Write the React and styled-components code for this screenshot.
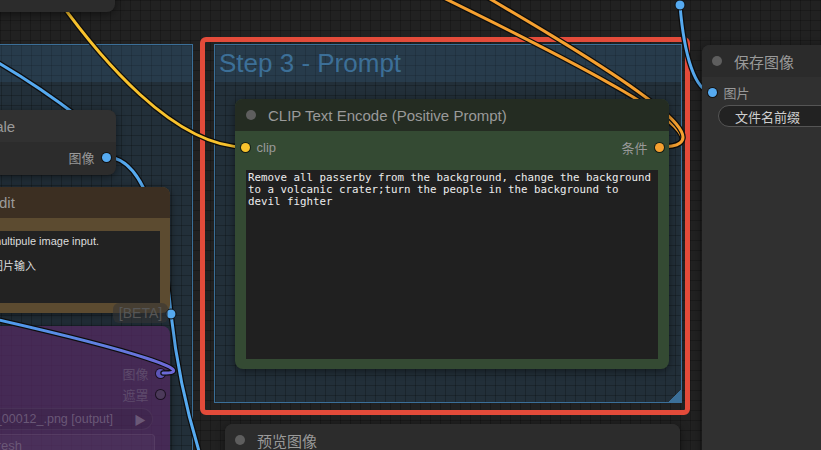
import styled, { createGlobalStyle } from 'styled-components'

const SANS = `"Liberation Sans", "Noto Sans CJK SC", Arial, sans-serif`
const MONO = `"DejaVu Sans Mono", "Liberation Mono", monospace`

const GlobalStyle = createGlobalStyle`
  html, body {
    margin: 0;
    padding: 0;
    background: #202020;
  }
`

const gridBg = `
  background-image:
    linear-gradient(rgba(0, 0, 0, 0.22) 1px, transparent 1px),
    linear-gradient(90deg, rgba(0, 0, 0, 0.22) 1px, transparent 1px);
  background-size: 10px 10px;
`

// canvas coordinates: the place of a group / node on the graph is the content
const placed = (p) => `
  left: ${p.$x}px;
  top: ${p.$y}px;
  width: ${p.$w}px;
  height: ${p.$h}px;
`

const Canvas = styled.div`
  position: relative;
  width: 821px;
  height: 450px;
  overflow: hidden;
  background-color: #212121;
  ${gridBg}
  font-family: ${SANS};
`

const Group = styled.section`
  position: absolute;
  ${placed}
  box-sizing: border-box;
  border: 1px solid #3b6f98;
  background-color: #222f39;
  ${gridBg}
  z-index: 0;
`
const GroupTitle = styled.h2`
  margin: 0;
  height: 37px;
  padding-left: 4px;
  background: rgba(60, 105, 140, 0.22);
  color: #3c6f97;
  font: 400 26px/37px ${SANS};
  white-space: nowrap;
`
const ResizeCorner = styled.div`
  position: absolute;
  right: 0;
  bottom: 0;
  width: 13px;
  height: 13px;
  background: linear-gradient(135deg, transparent 50%, #3b6f98 50%);
`

const Highlight = styled.div`
  position: absolute;
  ${placed}
  box-sizing: border-box;
  border: 5px solid #e34b3a;
  border-radius: 6px;
  z-index: 1;
`

const Layer = styled.svg`
  position: absolute;
  left: 0;
  top: 0;
  z-index: ${(p) => p.$z};
  pointer-events: none;
`

const Node = styled.div`
  position: absolute;
  ${placed}
  z-index: 3;
  display: flex;
  flex-direction: column;
  border-radius: 8px;
  overflow: hidden;
  background: ${(p) => p.$bg};
  box-shadow: 0 2px 8px rgba(0, 0, 0, 0.5);
`
const NodeTitle = styled.header`
  flex: none;
  height: ${(p) => p.$h ?? 32}px;
  display: flex;
  align-items: center;
  gap: 12px;
  padding-left: ${(p) => p.$pad ?? 11}px;
  background: ${(p) => p.$bg};
  color: #9a9a9a;
  font-size: 15px;
  white-space: nowrap;
`
const TitleDot = styled.span`
  flex: none;
  width: 10px;
  height: 10px;
  border-radius: 50%;
  background: #5e5e5e;
`
const NodeBody = styled.div`
  flex: 1;
  display: flex;
  flex-direction: column;
  padding: ${(p) => p.$pad};
`
const SlotRow = styled.div`
  display: flex;
  align-items: center;
  justify-content: ${(p) => (p.$out ? 'flex-end' : 'flex-start')};
  gap: 7px;
  height: ${(p) => p.$h ?? 20}px;
  color: ${(p) => p.$color ?? '#999999'};
  font-size: 13px;
  white-space: nowrap;
`
const OutputSide = styled(SlotRow)`
  flex: 1;
`
const SlotDot = styled.span`
  flex: none;
  width: 9px;
  height: 9px;
  border-radius: 50%;
  background: ${(p) => p.$color};
  box-shadow: 0 0 0 1px rgba(0, 0, 0, 0.6);
`
const PromptBox = styled.div`
  margin: 13px 5.5px 0;
  height: 189px;
  padding: 2px;
  box-sizing: border-box;
  background: #202020;
  color: #ececec;
  font: 10.8px/12px ${MONO};
  white-space: pre;
  overflow: hidden;
`
const NoteBox = styled.div`
  height: 72px;
  padding: 4px;
  box-sizing: border-box;
  background: #222222;
  color: #dddddd;
  font-size: 11px;
  line-height: 12.5px;
  white-space: pre;
  overflow: hidden;
`
const Pill = styled.div`
  display: flex;
  align-items: center;
  justify-content: ${(p) => p.$justify ?? 'flex-start'};
  gap: 21px;
  height: 22px;
  margin: ${(p) => p.$margin};
  padding: ${(p) => p.$pad};
  box-sizing: border-box;
  border-radius: ${(p) => p.$radius ?? 11}px;
  border: 1px solid ${(p) => p.$border};
  background: ${(p) => p.$bg};
  color: ${(p) => p.$color};
  font-size: ${(p) => p.$size ?? 13}px;
  white-space: nowrap;
`
const Arrow = styled.span`
  font-size: 12px;
`
const Badge = styled.div`
  position: absolute;
  left: 113px;
  top: 303px;
  width: 55px;
  height: 20px;
  z-index: 5;
  display: grid;
  place-items: center;
  border-radius: 6px;
  background: rgba(52, 52, 52, 0.55);
  color: #565656;
  font-size: 14px;
`

function Wire({ d, color }) {
  return (
    <g fill="none" strokeLinecap="round">
      <path d={d} stroke="#0d0d0d" strokeWidth="5.5" />
      <path d={d} stroke={color} strokeWidth="3" />
    </g>
  )
}

const YELLOW = '#f8c22d'
const ORANGE = '#f5a030'
const BLUE = '#56aaf0'

export default function App() {
  return (
    <>
      <GlobalStyle />
      <Canvas>
        <Group $x={-10} $y={44} $w={203} $h={420}>
          <GroupTitle />
        </Group>
        <Group $x={214} $y={44} $w={468} $h={359}>
          <GroupTitle>Step 3 - Prompt</GroupTitle>
          <ResizeCorner />
        </Group>
        <Highlight $x={200} $y={37} $w={490} $h={378} />

        <Layer $z={2} width="821" height="450" viewBox="0 0 821 450">
          <Wire d="M -10 58 C 20 75, 50 95, 80 118" color={BLUE} />
          <Wire d="M 50 -12 C 100 60, 175 147, 245 147" color={YELLOW} />
          <Wire d="M 106 157 C 150 157, 165 250, 171 314 C 176 360, 185 410, 205 470" color={BLUE} />
          <Wire d="M 680 5 C 684 55, 695 92, 712 92" color={BLUE} />
          <Wire d="M 659 147 C 820 147, 85 -150, 185 -150" color={ORANGE} />
          <Wire d="M 659 147 C 812 147, 180 -150, 280 -150" color={ORANGE} />
        </Layer>

        <Node $x={-20} $y={-22} $w={135} $h={34} $bg="#2c2c2c" />

        <Node $x={-72} $y={110} $w={188} $h={65} $bg="#2c2c2c">
          <NodeTitle $bg="#313131">
            <TitleDot />
            Upscale
          </NodeTitle>
          <NodeBody $pad="5px 5.5px 0">
            <SlotRow $out>
              图像
              <SlotDot $color={BLUE} />
            </SlotRow>
          </NodeBody>
        </Node>

        <Node $x={-44} $y={187} $w={214} $h={126} $bg="#5c4b30">
          <NodeTitle $bg="#3c2f22" $h={31}>
            <TitleDot />
            Edit
          </NodeTitle>
          <NodeBody $pad="13px 10px 10px 32px">
            <NoteBox>{'multipule image input.\n\n图片输入'}</NoteBox>
          </NodeBody>
        </Node>

        <Node $x={-60} $y={326} $w={230} $h={160} $bg="rgba(82, 40, 96, 0.74)">
          <NodeTitle $bg="transparent" />
          <NodeBody $pad="5px 5.5px 0 10px">
            <SlotRow $out $h={21} $color="#5e4a6c">
              图像
              <SlotDot $color="#5d56b8" />
            </SlotRow>
            <SlotRow $out $h={21} $color="#5e4a6c">
              遮罩
              <SlotDot $color="#4c3a5a" />
            </SlotRow>
            <Pill
              $justify="flex-end"
              $margin="3px 11.5px 0 0"
              $pad="0 6px 0 12px"
              $border="rgba(255, 255, 255, 0.05)"
              $bg="rgba(0, 0, 0, 0.07)"
              $color="#6a5877"
              $size={12.5}
            >
              ComfyUI_00012_.png [output]
              <Arrow>▶</Arrow>
            </Pill>
            <Pill
              $margin="4px 9.5px 0 0"
              $pad="0 0 0 30.5px"
              $radius={4}
              $border="rgba(255, 255, 255, 0.06)"
              $bg="rgba(255, 255, 255, 0.03)"
              $color="#6a5877"
            >
              refresh
            </Pill>
          </NodeBody>
        </Node>

        <Node $x={235} $y={99} $w={434} $h={270} $bg="#344a33">
          <NodeTitle $bg="#242c22">
            <TitleDot />
            CLIP Text Encode (Positive Prompt)
          </NodeTitle>
          <NodeBody $pad="6px 5.5px 0">
            <SlotRow>
              <SlotDot $color={YELLOW} />
              clip
              <OutputSide $out>
                条件
                <SlotDot $color={ORANGE} />
              </OutputSide>
            </SlotRow>
            <PromptBox>
              {'Remove all passerby from the background, change the background\nto a volcanic crater;turn the people in the background to\ndevil fighter'}
            </PromptBox>
          </NodeBody>
        </Node>

        <Node $x={702} $y={45} $w={140} $h={420} $bg="#303030">
          <NodeTitle $bg="#2b2b2b" $pad={10}>
            <TitleDot />
            保存图像
          </NodeTitle>
          <NodeBody $pad="5px 0 0 5.5px">
            <SlotRow>
              <SlotDot $color={BLUE} />
              图片
            </SlotRow>
            <Pill
              $margin="3px 0 0 10.5px"
              $pad="0 0 0 16px"
              $border="#555555"
              $bg="#222222"
              $color="#cfcfcf"
            >
              文件名前缀
            </Pill>
          </NodeBody>
        </Node>

        <Node $x={225} $y={424} $w={455} $h={60} $bg="#303030">
          <NodeTitle $bg="#2c2c2c" $pad={10}>
            <TitleDot />
            预览图像
          </NodeTitle>
        </Node>

        <Layer $z={4} width="821" height="450" viewBox="0 0 821 450">
          <defs>
            <linearGradient id="imgLink" x1="0" y1="0" x2="180" y2="0" gradientUnits="userSpaceOnUse">
              <stop offset="0" stopColor="#4f9fee" />
              <stop offset="1" stopColor="#6f66d6" />
            </linearGradient>
          </defs>
          <Wire d="M 163 373 C 200 373, 140 352, -10 318" color="url(#imgLink)" />
          <circle cx="171" cy="314" r="5" fill={BLUE} stroke="#0d0d0d" strokeWidth="1" />
          <circle cx="680" cy="5" r="5" fill={BLUE} stroke="#0d0d0d" strokeWidth="1" />
        </Layer>

        <Badge>[BETA]</Badge>
      </Canvas>
    </>
  )
}
